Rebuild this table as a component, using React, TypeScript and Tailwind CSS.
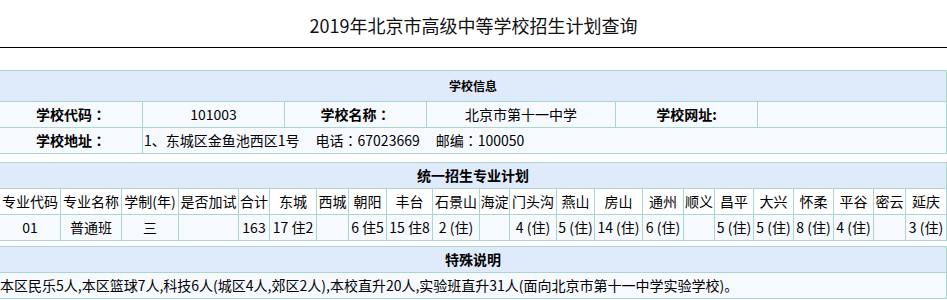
const cols = [
  "专业代码", "专业名称", "学制(年)", "是否加试", "合计", "东城", "西城", "朝阳", "丰台", "石景山", "海淀",
  "门头沟", "燕山", "房山", "通州", "顺义", "昌平", "大兴", "怀柔", "平谷", "密云", "延庆",
];

const row = [
  "01", "普通班", "三", "", "163", "17 住2", "", "6 住5", "15 住8", "2 (住)", "",
  "4 (住)", "5 (住)", "14 (住)", "6 (住)", "", "5 (住)", "5 (住)", "8 (住)", "4 (住)", "", "3 (住)",
];

// centered full-width colon, like YaHei
const Colon = () => <span className="font-['Noto_Sans_CJK_TC',sans-serif]">：</span>;

export default function App() {
  return (
    <div className="w-[947px] h-[300px] bg-white text-black font-['Noto_Sans_CJK_SC','Noto_Sans',sans-serif] overflow-hidden">
      <div className="h-[47px] flex items-center justify-center pt-[4px] text-[18px] text-[#111]">
        2019年北京市高级中等学校招生计划查询
      </div>
      <div className="h-px bg-black" />

      {/* 学校信息 */}
      <div className="mt-[22px] grid grid-cols-[142px_141px_141px_188px_141px_188px] gap-px bg-[#a9d6cf] pt-px pr-px pb-px text-[14px]">
        <div className="col-span-6 h-[30px] flex items-center justify-center bg-[#dfeafb] text-[12px] font-bold">学校信息</div>
        <div className="h-[25px] flex items-center justify-center bg-[#f6fafe] font-bold">学校代码<Colon /></div>
        <div className="h-[25px] flex items-center justify-center bg-[#f6fafe]">101003</div>
        <div className="h-[25px] flex items-center justify-center bg-[#f6fafe] font-bold">学校名称<Colon /></div>
        <div className="h-[25px] flex items-center justify-center bg-[#f6fafe]">北京市第十一中学</div>
        <div className="h-[25px] flex items-center justify-center bg-[#f6fafe] font-bold">学校网址:</div>
        <div className="h-[25px] bg-[#f6fafe]" />
        <div className="h-[25px] flex items-center justify-center bg-[#f6fafe] font-bold">学校地址<Colon /></div>
        <div className="col-span-5 h-[25px] flex items-center pl-px bg-[#f6fafe] whitespace-nowrap">
          <span>1、东城区金鱼池西区1号</span>
          <span className="ml-[16px]">电话<Colon />67023669</span>
          <span className="ml-[16px]">邮编<Colon />100050</span>
        </div>
      </div>

      {/* 统一招生专业计划 */}
      <div className="mt-[8px] grid grid-cols-[60px_60px_56px_59px_30px_46px_31px_37px_45px_46px_29px_46px_37px_47px_40px_30px_38px_39px_39px_39px_31px_40px] gap-px bg-[#a9d6cf] pt-px pr-px pb-px text-[14px]">
        <div className="col-span-22 h-[25px] flex items-center justify-center bg-[#dfeafb] font-bold">统一招生专业计划</div>
        {cols.map((c, i) => (
          <div key={"h" + i} className="h-[25px] flex items-center justify-center bg-white whitespace-nowrap">{c}</div>
        ))}
        {row.map((c, i) => (
          <div key={"d" + i} className="h-[25px] flex items-center justify-center bg-[#f6fafe] whitespace-nowrap">{c}</div>
        ))}
      </div>

      {/* 特殊说明 */}
      <div className="mt-[5px] grid grid-cols-1 gap-px bg-[#a9d6cf] pt-px pr-px pb-px text-[14px]">
        <div className="h-[25px] flex items-center justify-center bg-[#dfeafb] font-bold">特殊说明</div>
        <div className="h-[25px] flex items-center bg-[#f6fafe] whitespace-nowrap">
          本区民乐5人,本区篮球7人,科技6人(城区4人,郊区2人),本校直升20人,实验班直升31人(面向北京市第十一中学实验学校)。
        </div>
      </div>
    </div>
  );
}
